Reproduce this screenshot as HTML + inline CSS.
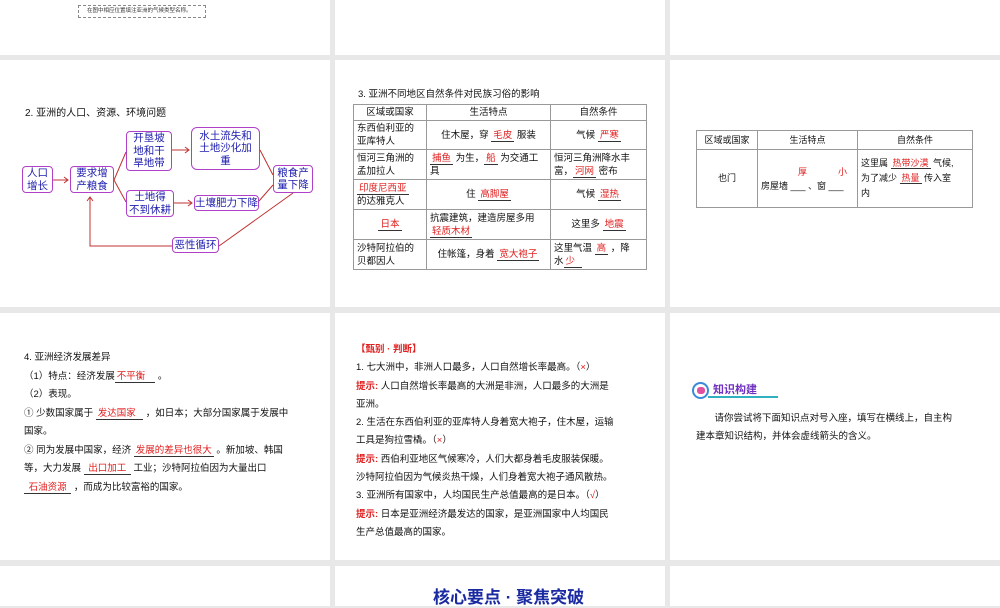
<!DOCTYPE html><html><head><meta charset="utf-8"><style>
*{margin:0;padding:0;box-sizing:border-box}
body{width:1000px;height:600px;background:#e8e8e8;position:relative;overflow:hidden;font-family:"Liberation Sans","Noto Sans CJK SC",sans-serif;color:#111}
.s{position:absolute;background:#fff}
.a{position:absolute;white-space:nowrap}
.r{color:#e02020}
.bx{position:absolute;border:1.3px solid #b040c8;border-radius:4px;color:#2020b0;font-size:10.5px;line-height:12.5px;text-align:center;display:flex;align-items:center;justify-content:center;background:#fff}
table{position:absolute;border-collapse:collapse;font-size:9.5px;line-height:13px}
td{border:1px solid #999;padding:0 3px;vertical-align:middle}
.u{border-bottom:1px solid #333;color:#e02020;padding:0 2px}
.t{font-size:9.5px;line-height:18.5px}
</style></head><body>
<div class="s" style="left:0;top:0;width:330px;height:55px"></div>
<div class="s" style="left:335px;top:0;width:330px;height:55px"></div>
<div class="s" style="left:670px;top:0;width:330px;height:55px"></div>
<div class="s" style="left:0;top:60px;width:330px;height:247px"></div>
<div class="s" style="left:335px;top:60px;width:330px;height:247px"></div>
<div class="s" style="left:670px;top:60px;width:330px;height:247px"></div>
<div class="s" style="left:0;top:313px;width:330px;height:247px"></div>
<div class="s" style="left:335px;top:313px;width:330px;height:247px"></div>
<div class="s" style="left:670px;top:313px;width:330px;height:247px"></div>
<div class="s" style="left:0;top:566px;width:330px;height:40px"></div>
<div class="s" style="left:335px;top:566px;width:330px;height:40px"></div>
<div class="s" style="left:670px;top:566px;width:330px;height:40px"></div>

<div class="a" style="left:78px;top:5px;width:128px;height:13px;border:1px dashed #888;font-size:5.5px;line-height:11px;padding-left:8px;color:#333">在图中相应位置填注亚洲的气候类型名称。</div>

<div class="a" style="left:25px;top:104px;font-size:10px">2. 亚洲的人口、资源、环境问题</div>
<svg class="a" style="left:0;top:60px" width="330" height="247">
<g stroke="#c03030" fill="none" stroke-width="1">
<path d="M53 120H68M64 117l4 3-4 3"/>
<path d="M114 120L126 92M114 120L126 142"/>
<path d="M172 90H189M185 87l4 3-4 3"/>
<path d="M174 143H192M188 140l4 3-4 3"/>
<path d="M260 90L273 115M259 141L273 125"/>
<path d="M293 133L219 186M172 186H90V137M87 141l3-4 3 4"/>
</g></svg>
<div class="bx" style="left:22px;top:166px;width:31px;height:27px">人口<br>增长</div>
<div class="bx" style="left:70px;top:166px;width:44px;height:27px">要求增<br>产粮食</div>
<div class="bx" style="left:126px;top:131px;width:46px;height:40px">开垦坡<br>地和干<br>旱地带</div>
<div class="bx" style="left:191px;top:127px;width:69px;height:43px;border-radius:6px">水土流失和<br>土地沙化加<br>重</div>
<div class="bx" style="left:126px;top:190px;width:48px;height:27px">土地得<br>不到休耕</div>
<div class="bx" style="left:194px;top:195px;width:65px;height:16px">土壤肥力下降</div>
<div class="bx" style="left:273px;top:165px;width:40px;height:28px">粮食产<br>量下降</div>
<div class="bx" style="left:172px;top:237px;width:47px;height:16px">恶性循环</div>

<div class="a" style="left:358px;top:86px;font-size:9.5px">3. 亚洲不同地区自然条件对民族习俗的影响</div>
<table style="left:353px;top:104px;width:294px">
<tr style="height:16px"><td style="width:73px;text-align:center">区域或国家</td><td style="width:124px;text-align:center">生活特点</td><td style="text-align:center">自然条件</td></tr>
<tr style="height:29px"><td>东西伯利亚的<br>亚库特人</td><td style="text-align:center">住木屋，穿 <span class="u">毛皮</span> 服装</td><td style="text-align:center">气候 <span class="u">严寒</span></td></tr>
<tr style="height:30px"><td>恒河三角洲的<br>孟加拉人</td><td><span class="u">捕鱼</span> 为生，<span class="u">船</span> 为交通工具</td><td>恒河三角洲降水丰<br>富，<span class="u">河网</span> 密布</td></tr>
<tr style="height:30px"><td><span class="u">印度尼西亚</span><br>的达雅克人</td><td style="text-align:center">住 <span class="u">高脚屋</span></td><td style="text-align:center">气候 <span class="u">湿热</span></td></tr>
<tr style="height:30px"><td style="text-align:center"><span class="u">日本</span></td><td>抗震建筑，建造房屋多用<br><span class="u">轻质木材</span></td><td style="text-align:center">这里多 <span class="u">地震</span></td></tr>
<tr style="height:30px"><td>沙特阿拉伯的<br>贝都因人</td><td style="text-align:center">住帐篷，身着 <span class="u">宽大袍子</span></td><td>这里气温 <span class="u">高</span> ，降<br>水<span class="u">少&nbsp;&nbsp;</span></td></tr>
</table>

<table style="left:696px;top:130px;width:277px;font-size:9px;border-color:#aaa">
<tr style="height:19px"><td style="width:61px;text-align:center">区域或国家</td><td style="width:100px;text-align:center">生活特点</td><td style="text-align:center">自然条件</td></tr>
<tr style="height:58px"><td style="text-align:center">也门</td><td style="position:relative;line-height:14px"><span class="r" style="position:absolute;left:40px;top:15px">厚</span><span class="r" style="position:absolute;left:80px;top:15px">小</span><br>房屋墙 ___ 、窗 ___</td><td style="line-height:15px">这里属 <span class="u">热带沙漠</span> 气候,<br>为了减少 <span class="u">热量</span> 传入室<br>内</td></tr>
</table>

<div class="a t" style="left:24px;top:349px">4. 亚洲经济发展差异<br>（1）特点：经济发展<span class="u">不平衡&nbsp;&nbsp;&nbsp;</span> 。<br>（2）表现。<br>① 少数国家属于 <span class="u">发达国家&nbsp;&nbsp;</span> ，如日本；大部分国家属于发展中<br>国家。<br>② 同为发展中国家，经济 <span class="u">发展的差异也很大</span> 。新加坡、韩国<br>等，大力发展 <span class="u">&nbsp;出口加工&nbsp;</span> 工业；沙特阿拉伯因为大量出口<br><span class="u">&nbsp;石油资源&nbsp;</span> ，而成为比较富裕的国家。</div>

<div class="a t" style="left:356px;top:341px;line-height:18.3px"><span class="r" style="font-weight:bold">【甄别 · 判断】</span><br>1. 七大洲中，非洲人口最多，人口自然增长率最高。（<span class="r">×</span>）<br><span class="r" style="font-weight:bold">提示:</span> 人口自然增长率最高的大洲是非洲，人口最多的大洲是<br>亚洲。<br>2. 生活在东西伯利亚的亚库特人身着宽大袍子，住木屋，运输<br>工具是狗拉雪橇。（<span class="r">×</span>）<br><span class="r" style="font-weight:bold">提示:</span> 西伯利亚地区气候寒冷，人们大都身着毛皮服装保暖。<br>沙特阿拉伯因为气候炎热干燥，人们身着宽大袍子通风散热。<br>3. 亚洲所有国家中，人均国民生产总值最高的是日本。（<span class="r">√</span>）<br><span class="r" style="font-weight:bold">提示:</span> 日本是亚洲经济最发达的国家，是亚洲国家中人均国民<br>生产总值最高的国家。</div>

<div class="a" style="left:692px;top:382px;width:17px;height:17px;border-radius:50%;border:2px solid #3a8ad8;background:#fff"><div style="position:absolute;left:3px;top:3px;width:8px;height:7px;border-radius:3px;background:#e050a0"></div></div>
<div class="a" style="left:713px;top:381px;font-size:11px;font-weight:bold;color:#7030c0">知识构建</div>
<div class="a" style="left:708px;top:396px;width:70px;height:1.5px;background:#30b0c0"></div>
<div class="a t" style="left:696px;top:410px;line-height:18px">&nbsp;&nbsp;&nbsp;&nbsp;&nbsp;&nbsp;&nbsp;请你尝试将下面知识点对号入座，填写在横线上，自主构<br>建本章知识结构，并体会虚线箭头的含义。</div>

<div class="a" style="left:433px;top:583px;font-size:17px;font-weight:bold;color:#1a2aa0">核心要点 · 聚焦突破</div>
</body></html>
